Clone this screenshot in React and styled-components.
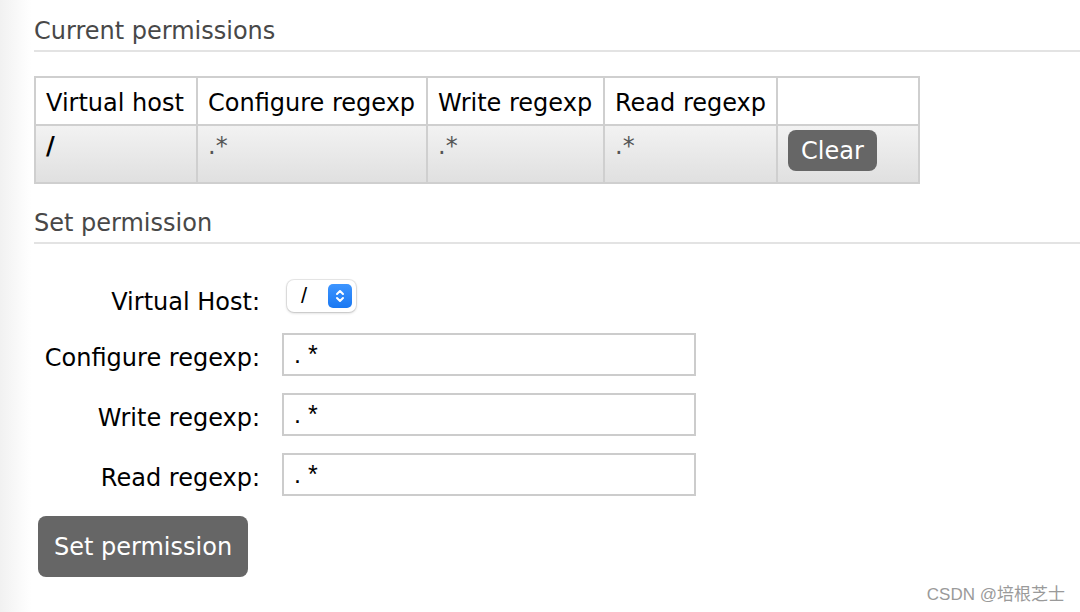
import React from "react";
import styled, { createGlobalStyle } from "styled-components";

const GlobalStyle = createGlobalStyle`
  html, body {
    margin: 0;
    padding: 0;
  }
  body {
    background: linear-gradient(to right, #f1f1f1 0, #fafafa 20px, #fff 32px);
    font-family: "DejaVu Sans", Verdana, sans-serif;
    color: #000;
  }
`;

const Page = styled.div`
  position: relative;
  width: 1080px;
  height: 612px;
  padding-left: 34px;
  box-sizing: border-box;
  overflow: hidden;
`;

const SectionTitle = styled.h2`
  margin: 0;
  padding-top: ${(p) => p.$top}px;
  padding-bottom: 5px;
  font-size: 24px;
  font-weight: normal;
  line-height: 28px;
  color: #484848;
  border-bottom: 2px solid #e3e3e3;
`;

const PermTable = styled.table`
  margin-top: 24px;
  border-collapse: collapse;
  font-size: 24px;
  table-layout: fixed;
  width: 884px;

  th, td {
    border: 2px solid #cfcfcf;
    padding: 0 10px;
    text-align: left;
    white-space: nowrap;
  }
  th {
    font-weight: normal;
    height: 42px;
    padding-top: 4px;
    background: #fff;
  }
  td {
    height: 50px;
    vertical-align: top;
    padding-top: 6px;
    color: #555;
    background: linear-gradient(to bottom, #f2f2f2, #e0e0e0);
  }
`;

const HostCell = styled.td`
  && {
    color: #000;
    font-weight: bold;
  }
`;

const GreyButton = styled.button`
  border: none;
  background: #666;
  color: #fff;
  font-family: "DejaVu Sans", Verdana, sans-serif;
  font-size: ${(p) => p.$size}px;
  height: ${(p) => p.$h}px;
  padding: 0 ${(p) => p.$pad}px;
  border-radius: 8px;
  cursor: pointer;
`;

const ClearCell = styled.td`
  && {
    padding-top: 4px;
  }
`;

const Form = styled.div`
  display: grid;
  grid-template-columns: 226px 414px;
  grid-template-rows: 36px 43px 43px 43px;
  column-gap: 22px;
  row-gap: 17px;
  align-items: center;
  margin-top: 36px;
`;

const Label = styled.label`
  font-size: 24px;
  text-align: right;
  grid-column: 1;
  padding-top: ${(p) => p.$pt || 6}px;
`;

const SelectBox = styled.div`
  grid-column: 2;
  align-self: start;
  margin-left: 5px;
  width: 69px;
  height: 32px;
  box-sizing: border-box;
  border-radius: 7px;
  background: #fff;
  box-shadow: 0 0 0 1px rgba(0, 0, 0, 0.08), 0 1px 3px rgba(0, 0, 0, 0.2);
  display: flex;
  align-items: center;
  justify-content: space-between;
  padding: 0 4px 0 14px;
  font-size: 22px;
  font-family: "Liberation Sans", Arial, sans-serif;
`;

const Stepper = styled.div`
  width: 24px;
  height: 24px;
  border-radius: 5px;
  background: linear-gradient(to bottom, #3d95ff, #1a78f2);
  display: flex;
  align-items: center;
  justify-content: center;
`;

const TextInput = styled.input`
  grid-column: 2;
  height: 43px;
  box-sizing: border-box;
  border: 2px solid #cccccc;
  padding: 0 10px;
  font-family: "Liberation Sans", Arial, sans-serif;
  font-size: 25px;
  letter-spacing: 7px;
  color: #000;
  outline: none;
`;

const ButtonRow = styled.div`
  margin-top: 20px;
  padding-left: 4px;
`;

const Watermark = styled.div`
  position: absolute;
  right: 15px;
  bottom: 7px;
  font-family: "Liberation Sans", "Noto Sans CJK SC", sans-serif;
  font-size: 17px;
  color: #9a9a9a;
`;

const rows = [{ host: "/", configure: ".*", write: ".*", read: ".*" }];

export default function App() {
  return (
    <Page>
      <GlobalStyle />
      <SectionTitle $top={17}>Current permissions</SectionTitle>
      <PermTable>
        <colgroup>
          <col style={{ width: 162 }} />
          <col style={{ width: 230 }} />
          <col style={{ width: 177 }} />
          <col style={{ width: 173 }} />
          <col style={{ width: 142 }} />
        </colgroup>
        <thead>
          <tr>
            <th>Virtual host</th>
            <th>Configure regexp</th>
            <th>Write regexp</th>
            <th>Read regexp</th>
            <th></th>
          </tr>
        </thead>
        <tbody>
          {rows.map((r) => (
            <tr key={r.host}>
              <HostCell>{r.host}</HostCell>
              <td>{r.configure}</td>
              <td>{r.write}</td>
              <td>{r.read}</td>
              <ClearCell>
                <GreyButton $size={24} $h={41} $pad={13}>
                  Clear
                </GreyButton>
              </ClearCell>
            </tr>
          ))}
        </tbody>
      </PermTable>

      <SectionTitle $top={25}>Set permission</SectionTitle>
      <Form>
        <Label $pt={8}>Virtual Host:</Label>
        <SelectBox>
          <span>/</span>
          <Stepper>
            <svg width="12" height="16" viewBox="0 0 12 16" fill="none">
              <path d="M3 6l3-3 3 3M3 10l3 3 3-3" stroke="#fff" strokeWidth="2" strokeLinecap="round" strokeLinejoin="round" />
            </svg>
          </Stepper>
        </SelectBox>
        <Label>Configure regexp:</Label>
        <TextInput defaultValue=".*" />
        <Label>Write regexp:</Label>
        <TextInput defaultValue=".*" />
        <Label>Read regexp:</Label>
        <TextInput defaultValue=".*" />
      </Form>
      <ButtonRow>
        <GreyButton $size={24} $h={61} $pad={16}>
          Set permission
        </GreyButton>
      </ButtonRow>
      <Watermark>CSDN @培根芝士</Watermark>
    </Page>
  );
}
